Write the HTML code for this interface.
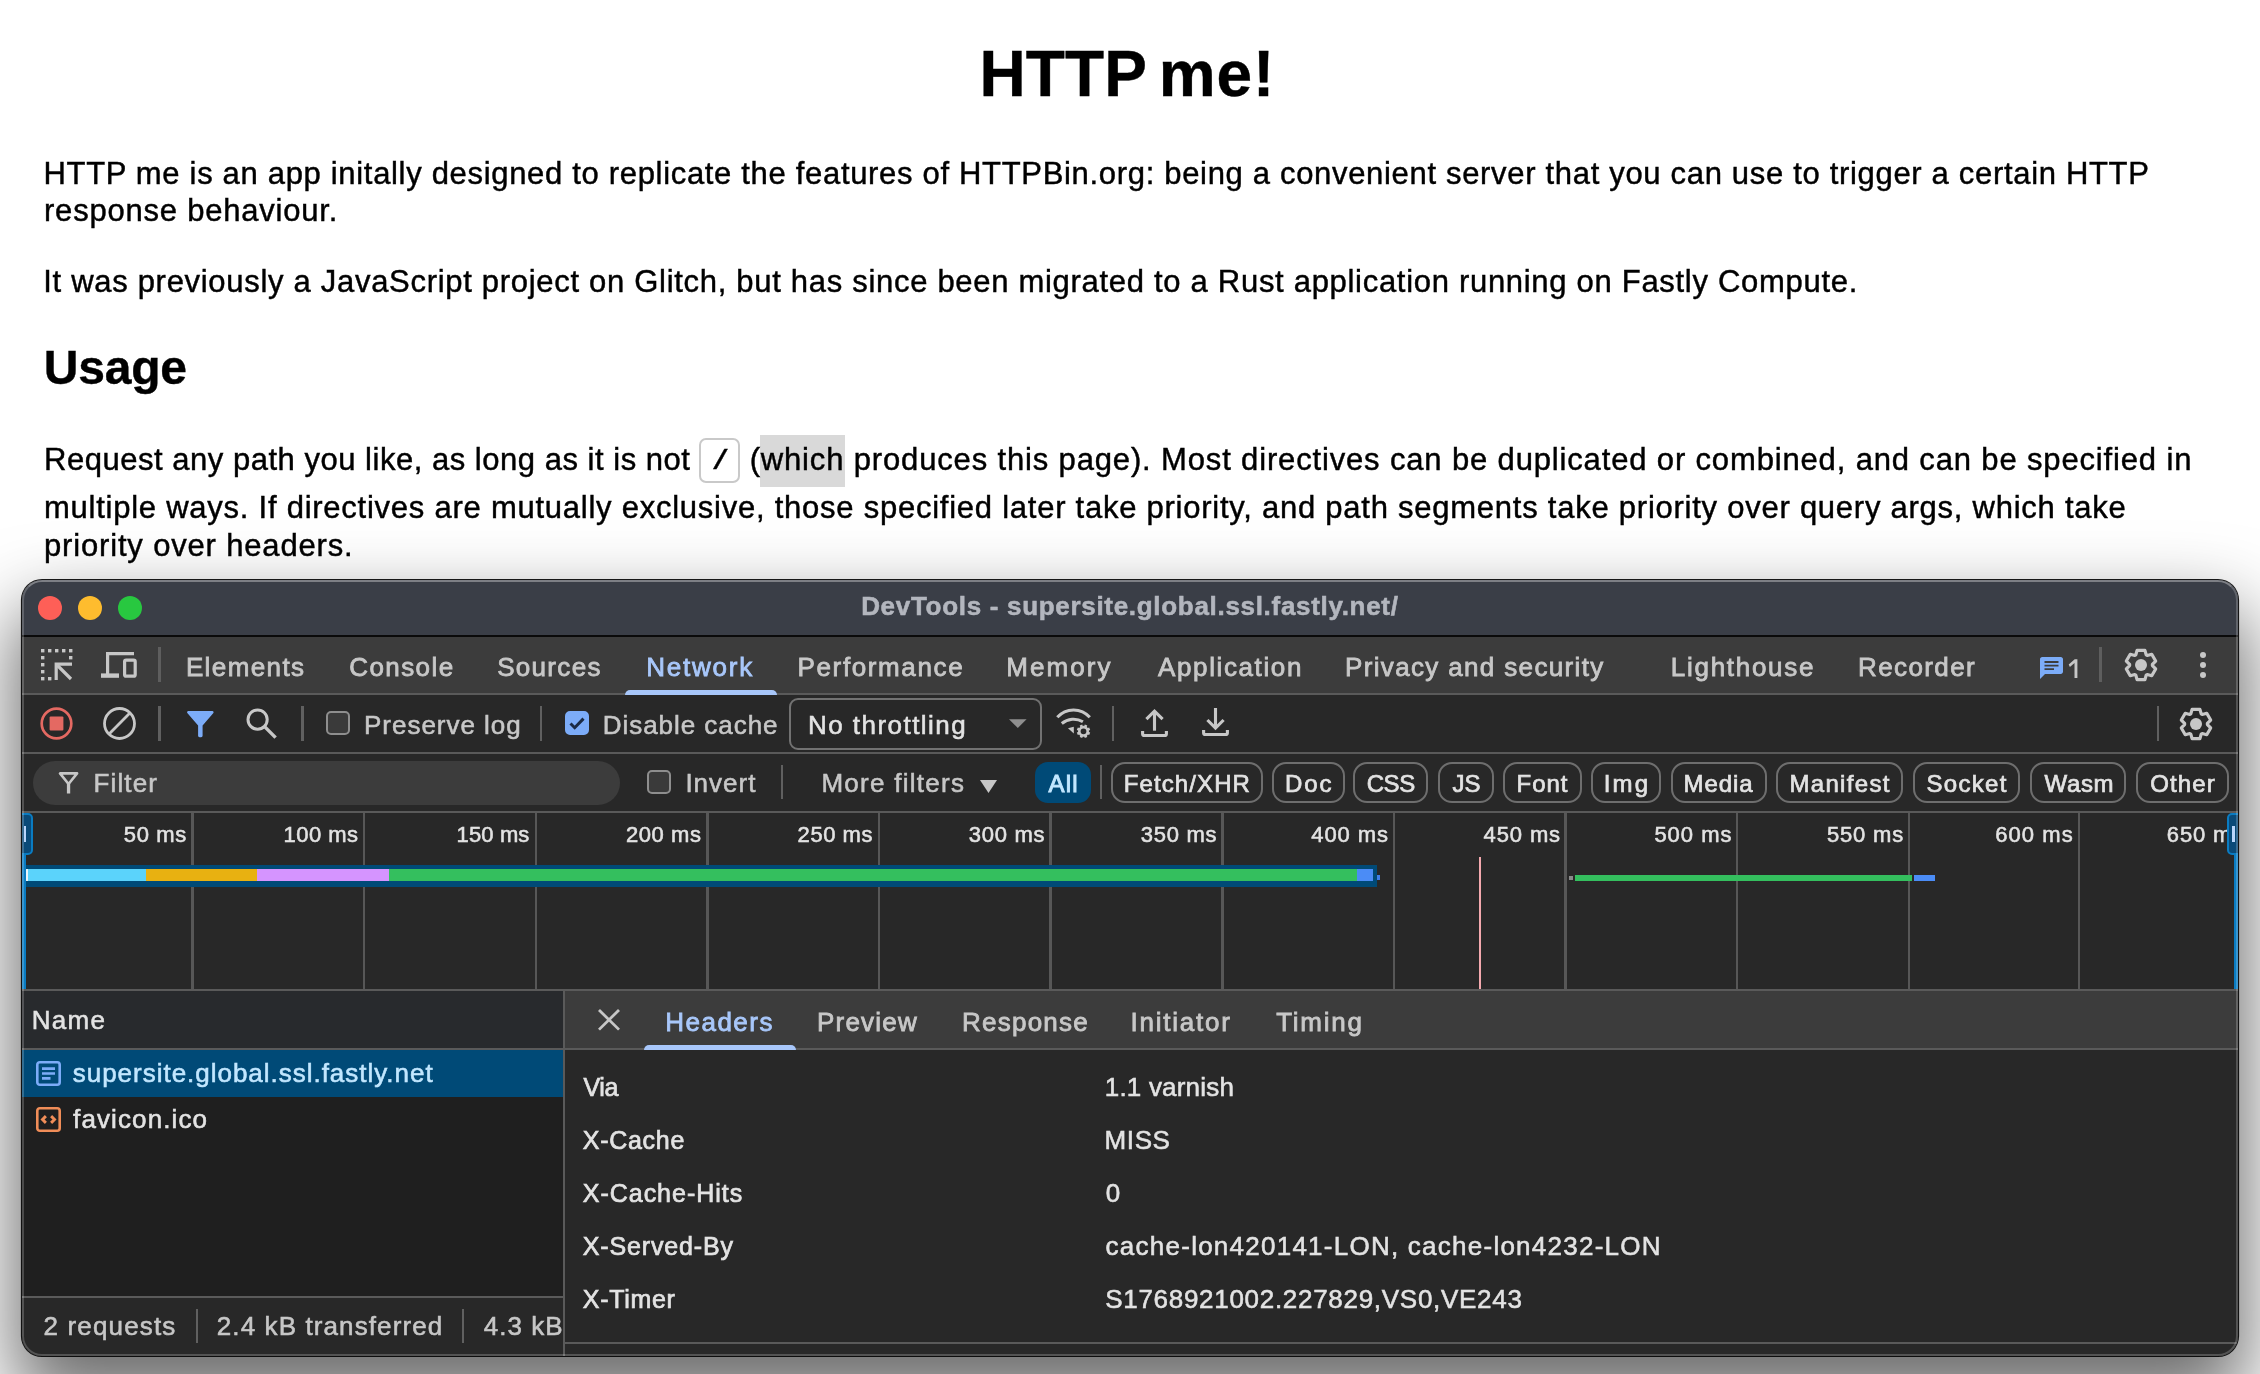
<!DOCTYPE html>
<html><head><meta charset="utf-8"><title>HTTP me!</title>
<style>
html,body{margin:0;padding:0}
body{width:2260px;height:1374px;overflow:hidden;background:#fff;position:relative;font-family:"Liberation Sans",sans-serif}
.t{position:absolute;line-height:1;white-space:nowrap;font-family:"Liberation Sans",sans-serif}
.a{position:absolute}
.hl{left:760px;top:435px;width:85px;height:52px;background:#d9d9d9}
.code{left:699px;top:438px;width:41px;height:45px;box-sizing:border-box;border:2px solid #c9c9c9;border-radius:7px;background:#fff}
.shadow{left:22px;top:580px;width:2216px;height:776px;border-radius:20px;box-shadow:0 0 0 1.1px rgba(0,0,0,.9),0 38px 76px 8px rgba(0,0,0,.58)}
.win{will-change:transform;left:22px;top:580px;width:2216px;height:776px;border-radius:20px;overflow:hidden;background:#282828}
.in{left:-22px;top:-580px;width:2260px;height:1374px}
.pg{left:0;top:0;width:2260px;height:580px;will-change:transform}
.ln{position:absolute;background:#5a5a5a}
.vsep{position:absolute;width:2.2px;background:#606060}
.pill{position:absolute;top:762.2px;height:40.6px;box-sizing:border-box;border:2px solid #6e6e6e;border-radius:14px}
.cb{position:absolute;width:24px;height:24px;box-sizing:border-box;border:2px solid #8e8e8e;border-radius:5px;background:#3a3a3a}
svg{position:absolute;overflow:visible}
</style></head><body>
<div class="a hl"></div>
<div class="a code"></div>
<div class="a pg"><span class="t" style="left:979.56px;top:41.5px;font-size:64px;color:#000;font-weight:700;letter-spacing:0.092px;-webkit-text-stroke:0.4px;">HTTP</span>
<span class="t" style="left:1158.67px;top:41.5px;font-size:64px;color:#000;font-weight:700;letter-spacing:0.944px;-webkit-text-stroke:0.4px;">me!</span>
<span class="t" style="left:43.46px;top:157.6px;font-size:31px;color:#000;letter-spacing:0.680px;-webkit-text-stroke:0.45px;">HTTP me is an app initally designed to replicate the features of HTTPBin.org: being a convenient server that you can use to trigger a certain HTTP</span>
<span class="t" style="left:44.03px;top:195.3px;font-size:31px;color:#000;letter-spacing:0.786px;-webkit-text-stroke:0.45px;">response behaviour.</span>
<span class="t" style="left:43.19px;top:266.0px;font-size:31px;color:#000;letter-spacing:0.700px;-webkit-text-stroke:0.45px;">It was previously a JavaScript project on Glitch, but has since been migrated to a Rust application running on Fastly Compute.</span>
<span class="t" style="left:43.75px;top:344.0px;font-size:48px;color:#000;font-weight:700;letter-spacing:-0.191px;-webkit-text-stroke:0.4px;">Usage</span>
<span class="t" style="left:44.06px;top:443.9px;font-size:31px;color:#000;letter-spacing:0.517px;-webkit-text-stroke:0.45px;">Request any path you like, as long as it is not</span>
<span class="t" style="left:711.98px;top:447.6px;font-size:28px;color:#000;font-weight:700;font-family:'Liberation Mono', monospace;-webkit-text-stroke:0.4px;">/</span>
<span class="t" style="left:749.63px;top:443.9px;font-size:31px;color:#000;letter-spacing:0.847px;-webkit-text-stroke:0.45px;">(which produces this page). Most directives can be duplicated or combined, and can be specified in</span>
<span class="t" style="left:44.01px;top:491.6px;font-size:31px;color:#000;letter-spacing:0.752px;-webkit-text-stroke:0.45px;">multiple ways. If directives are mutually exclusive, those specified later take priority, and path segments take priority over query args, which take</span>
<span class="t" style="left:44.06px;top:529.5px;font-size:31px;color:#000;letter-spacing:0.830px;-webkit-text-stroke:0.45px;">priority over headers.</span></div>
<div class="a shadow"></div>
<div class="a win"><div class="a in">
<!-- title bar -->
<div class="a" style="left:0;top:580px;width:2260px;height:57px;background:#3a3e47"></div>

<div class="a" style="left:0;top:635px;width:2260px;height:2px;background:#0a0a0a"></div>
<div class="a" style="left:38px;top:596px;width:24px;height:24px;border-radius:50%;background:#fe5f57"></div>
<div class="a" style="left:78px;top:596px;width:24px;height:24px;border-radius:50%;background:#febc2e"></div>
<div class="a" style="left:118px;top:596px;width:24px;height:24px;border-radius:50%;background:#28c840"></div>
<!-- tab bar -->
<div class="a" style="left:0;top:637px;width:2260px;height:57px;background:#3c3c3c"></div>
<div class="ln" style="left:0;top:693px;width:2260px;height:2px"></div>
<div class="a" style="left:624.7px;top:690.2px;width:152px;height:5px;background:#a8c7fa;border-radius:5px 5px 0 0"></div>
<div class="vsep" style="left:158px;top:647px;height:35px;width:3px;background:#5e5e5e"></div>
<div class="vsep" style="left:2099px;top:647px;height:35px;width:3px;background:#5e5e5e"></div>
<!-- toolbar -->
<div class="a" style="left:0;top:695px;width:2260px;height:57px;background:#282828"></div>
<div class="ln" style="left:0;top:752px;width:2260px;height:2px"></div>
<div class="vsep" style="left:158.2px;top:706px;height:35px;width:2.6px"></div>
<div class="vsep" style="left:301.2px;top:706px;height:35px;width:2.6px"></div>
<div class="vsep" style="left:540px;top:706px;height:35px"></div>
<div class="vsep" style="left:1112px;top:706px;height:35px"></div>
<div class="vsep" style="left:2157px;top:706px;height:35px"></div>
<div class="cb" style="left:326px;top:711px"></div>
<div class="cb" style="left:565px;top:711px;background:#7cacf8;border-color:#7cacf8"></div>
<svg style="left:565px;top:711px" width="24" height="24" viewBox="0 0 24 24"><path d="M5.5 12.5l4.2 4.2L18.5 7.6" fill="none" stroke="#1b2b45" stroke-width="3"/></svg>
<div class="a" style="left:789.3px;top:697.8px;width:252.4px;height:52px;box-sizing:border-box;border:2px solid #727272;border-radius:9px"></div>
<svg style="left:1009.3px;top:719.2px" width="17.6" height="9.2" viewBox="0 0 18 9"><path d="M0 0h18l-9 9z" fill="#8f8f8f"/></svg>
<!-- filter row -->
<div class="a" style="left:0;top:754px;width:2260px;height:58px;background:#282828"></div>
<div class="ln" style="left:0;top:811px;width:2260px;height:2px"></div>
<div class="a" style="left:33px;top:761px;width:587px;height:44px;border-radius:22px;background:#3c3c3c"></div>
<div class="cb" style="left:647.2px;top:770px"></div>
<div class="vsep" style="left:781px;top:765px;height:34px"></div>
<svg style="left:980px;top:780px" width="17" height="13" viewBox="0 0 17 13"><path d="M0 0h17l-8.5 13z" fill="#c7c7c7"/></svg>
<div class="a" style="left:1035.1px;top:762.2px;width:55.6px;height:40.6px;border-radius:13px;background:#004a77"></div>
<div class="vsep" style="left:1100px;top:765px;height:34px"></div>
<div class="pill" style="left:1110.7px;width:152.0px"></div><div class="pill" style="left:1271.8px;width:73.2px"></div><div class="pill" style="left:1352.8px;width:75.7px"></div><div class="pill" style="left:1437.9px;width:55.8px"></div><div class="pill" style="left:1503.4px;width:78.3px"></div><div class="pill" style="left:1590.8px;width:69.9px"></div><div class="pill" style="left:1670.5px;width:96.1px"></div><div class="pill" style="left:1776.4px;width:127.1px"></div><div class="pill" style="left:1912.9px;width:107.6px"></div><div class="pill" style="left:2029.6px;width:96.8px"></div><div class="pill" style="left:2136.2px;width:92.4px"></div>
<!-- timeline -->
<div class="a" style="left:0;top:813px;width:2260px;height:177px;background:#282828"></div>
<div class="a" style="left:191.3px;top:813px;width:2.5px;height:176px;background:#575757"></div><div class="a" style="left:362.9px;top:813px;width:2.5px;height:176px;background:#575757"></div><div class="a" style="left:534.6px;top:813px;width:2.5px;height:176px;background:#575757"></div><div class="a" style="left:706.2px;top:813px;width:2.5px;height:176px;background:#575757"></div><div class="a" style="left:877.8px;top:813px;width:2.5px;height:176px;background:#575757"></div><div class="a" style="left:1049.4px;top:813px;width:2.5px;height:176px;background:#575757"></div><div class="a" style="left:1221.0px;top:813px;width:2.5px;height:176px;background:#575757"></div><div class="a" style="left:1392.6px;top:813px;width:2.5px;height:176px;background:#575757"></div><div class="a" style="left:1564.3px;top:813px;width:2.5px;height:176px;background:#575757"></div><div class="a" style="left:1735.9px;top:813px;width:2.5px;height:176px;background:#575757"></div><div class="a" style="left:1907.5px;top:813px;width:2.5px;height:176px;background:#575757"></div><div class="a" style="left:2077.5px;top:813px;width:2.5px;height:176px;background:#575757"></div><div class="a" style="left:26px;top:864.5px;width:1351px;height:22.5px;background:#004a77"></div><div class="a" style="left:26.2px;top:869px;width:119.4px;height:11.5px;background:#5bd3fb"></div><div class="a" style="left:145.6px;top:869px;width:111.4px;height:11.5px;background:#e8b111"></div><div class="a" style="left:257.0px;top:869px;width:132.0px;height:11.5px;background:#d594ff"></div><div class="a" style="left:389.0px;top:869px;width:968.0px;height:11.5px;background:#34bf5e"></div><div class="a" style="left:1357.0px;top:869px;width:15.6px;height:11.5px;background:#4b8cf6"></div><div class="a" style="left:26px;top:869px;width:2px;height:11.5px;background:#e8f4fb"></div><div class="a" style="left:1376.5px;top:875px;width:3px;height:5px;background:#3f7fe6"></div><div class="a" style="left:1478.8px;top:857px;width:2.6px;height:132px;background:#f3a9ae"></div><div class="a" style="left:1568.5px;top:875.5px;width:4px;height:4.5px;background:#8a8a8a"></div><div class="a" style="left:1575.2px;top:875px;width:336.8px;height:5.5px;background:#34bf5e"></div><div class="a" style="left:1913.5px;top:875px;width:21px;height:5.5px;background:#4b8cf6"></div><div class="a" style="left:22px;top:814px;width:4px;height:175px;background:#0a7cc2"></div><div class="a" style="left:2233.5px;top:814px;width:4px;height:175px;background:#0a7cc2"></div><div class="a" style="left:18px;top:813px;width:14.5px;height:42px;box-sizing:border-box;border:2px solid #0a7cc2;border-radius:5px;background:#0a4a78"></div><div class="a" style="left:23.6px;top:825.8px;width:2.5px;height:16px;background:#b9d6fb"></div><div class="a" style="left:2227px;top:813px;width:14.5px;height:42px;box-sizing:border-box;border:2px solid #0a7cc2;border-radius:5px;background:#0a4a78"></div><div class="a" style="left:2232px;top:825.8px;width:2.5px;height:16px;background:#b9d6fb"></div>
<div class="ln" style="left:0;top:989px;width:2260px;height:2px"></div>
<!-- lower panes -->
<div class="a" style="left:0;top:991px;width:563px;height:365px;background:#1f1f1f"></div>
<div class="a" style="left:22px;top:991px;width:541px;height:57px;background:#282a2d"></div>
<div class="ln" style="left:22px;top:1048px;width:541px;height:2px"></div>
<div class="a" style="left:22px;top:1050px;width:541px;height:47px;background:#004a77"></div>
<div class="ln" style="left:22px;top:1296px;width:541px;height:2px"></div>
<div class="a" style="left:22px;top:1298px;width:541px;height:58px;background:#282828"></div>
<div class="vsep" style="left:196px;top:1309px;height:34px"></div>
<div class="vsep" style="left:462px;top:1309px;height:34px"></div>
<div class="a" style="left:565px;top:991px;width:1695px;height:58px;background:#3c3c3c"></div>
<div class="ln" style="left:565px;top:1048px;width:1695px;height:2px"></div>
<div class="a" style="left:643.8px;top:1045px;width:152.4px;height:5px;background:#a8c7fa;border-radius:5px 5px 0 0"></div>
<div class="a" style="left:565px;top:1050px;width:1695px;height:306px;background:#282828"></div>
<div class="ln" style="left:565px;top:1342px;width:1695px;height:2px"></div>
<div class="vsep" style="left:563px;top:991px;height:365px;background:#5a5a5a"></div>
<svg style="left:41px;top:649px" width="32" height="32" viewBox="0 0 32 32"><g fill="#c7c7c7"><rect x="0" y="0" width="3.4" height="3.4"/><rect x="7" y="0" width="3.4" height="3.4"/><rect x="14" y="0" width="3.4" height="3.4"/><rect x="21" y="0" width="3.4" height="3.4"/><rect x="28" y="0" width="3.4" height="3.4"/><rect x="0" y="7" width="3.4" height="3.4"/><rect x="28" y="7" width="3.4" height="3.4"/><rect x="0" y="14" width="3.4" height="3.4"/><rect x="0" y="21" width="3.4" height="3.4"/><rect x="0" y="28" width="3.4" height="3.4"/><rect x="7" y="28" width="3.4" height="3.4"/></g><path d="M15.2 31V15.2H31" fill="none" stroke="#c7c7c7" stroke-width="3.2"/><path d="M16.5 16.5L30 30" stroke="#c7c7c7" stroke-width="3.2"/></svg><svg style="left:101px;top:651px" width="37" height="29" viewBox="0 0 37 29"><path d="M33 2.6H6.6V24" fill="none" stroke="#c7c7c7" stroke-width="3.2"/><rect x="0" y="22.4" width="18" height="4.4" fill="#c7c7c7"/><rect x="23.6" y="9.2" width="10.6" height="16" rx="1.5" fill="none" stroke="#c7c7c7" stroke-width="3.2"/></svg><svg style="left:40.4px;top:707.3px" width="33" height="33" viewBox="0 0 33 33"><circle cx="16.5" cy="16.5" r="14.8" fill="none" stroke="#e46962" stroke-width="2.7"/><rect x="9.6" y="9.6" width="13.8" height="13.8" rx="1" fill="#e46962"/></svg><svg style="left:102.5px;top:707.3px" width="33" height="33" viewBox="0 0 33 33"><circle cx="16.5" cy="16.5" r="15" fill="none" stroke="#c7c7c7" stroke-width="2.8"/><path d="M6.1 26.9L26.9 6.1" stroke="#c7c7c7" stroke-width="2.8"/></svg><svg style="left:186.7px;top:710.6px" width="26.7" height="26.3" viewBox="0 0 26.7 26.3"><path d="M1.3 0h24.1c1 0 1.6 1.1 1 1.9L15.6 14.4v10.4c0 .8-.7 1.5-1.5 1.5h-1.5c-.8 0-1.5-.7-1.5-1.5V14.4L.3 1.9C-.3 1.1.3 0 1.3 0z" fill="#7cacf8"/></svg><svg style="left:246px;top:708px" width="31" height="31" viewBox="0 0 31 31"><circle cx="11.6" cy="11.6" r="9.6" fill="none" stroke="#c7c7c7" stroke-width="3"/><path d="M18.6 18.6L29.6 29.6" stroke="#c7c7c7" stroke-width="3.4"/></svg><svg style="left:1056px;top:708px" width="36" height="31" viewBox="0 0 36 31"><g fill="none" stroke="#c7c7c7" stroke-width="3"><path d="M1.3 9.3A21.5 21.5 0 0 1 33.8 9.3"/><path d="M5.8 15.5A18.1 18.1 0 0 1 26.9 13.8"/></g><path d="M12 20.2l5.8-1.4v6.6z" fill="#c7c7c7"/><circle cx="27.5" cy="23.3" r="4.2" fill="none" stroke="#c7c7c7" stroke-width="2.6"/><path d="M31.75 25.06L33.69 25.86M29.26 27.55L30.06 29.49M25.74 27.55L24.94 29.49M23.25 25.06L21.31 25.86M23.25 21.54L21.31 20.74M25.74 19.05L24.94 17.11M29.26 19.05L30.06 17.11M31.75 21.54L33.69 20.74" stroke="#c7c7c7" stroke-width="2.7"/></svg><svg style="left:1141px;top:709px" width="27" height="28" viewBox="0 0 27 28"><g fill="none" stroke="#c7c7c7" stroke-width="3.1"><path d="M13.5 21.7V2.2"/><path d="M5.4 10.2L13.5 2.1 21.6 10.2"/><path d="M1.6 22v2.7c0 1 .8 1.8 1.8 1.8h20.2c1 0 1.8-.8 1.8-1.8V22"/></g></svg><svg style="left:1202.3px;top:708.4px" width="27" height="28" viewBox="0 0 27 28"><g fill="none" stroke="#c7c7c7" stroke-width="3.1"><path d="M13.5 0V19.8"/><path d="M5.4 12L13.5 20.1 21.6 12"/><path d="M1.6 22v2.7c0 1 .8 1.8 1.8 1.8h20.2c1 0 1.8-.8 1.8-1.8V22"/></g></svg><svg style="left:2141px;top:665.1px" width="1" height="1" viewBox="0 0 1 1"><path d="M-5.18 -10.16 L-3.93 -14.68 L3.93 -14.68 L5.18 -10.16 L6.21 -9.56 L10.75 -10.75 L14.68 -3.93 L11.38 -0.60 L11.38 0.60 L14.68 3.93 L10.75 10.75 L6.21 9.56 L5.18 10.16 L3.93 14.68 L-3.93 14.68 L-5.18 10.16 L-6.21 9.56 L-10.75 10.75 L-14.68 3.93 L-11.38 0.60 L-11.38 -0.60 L-14.68 -3.93 L-10.75 -10.75 L-6.21 -9.56Z" fill="none" stroke="#c7c7c7" stroke-width="3.2" stroke-linejoin="round"/><circle cx="0" cy="0" r="6" fill="#c7c7c7"/></svg><svg style="left:2195.7px;top:723.9px" width="1" height="1" viewBox="0 0 1 1"><path d="M-5.18 -10.16 L-3.93 -14.68 L3.93 -14.68 L5.18 -10.16 L6.21 -9.56 L10.75 -10.75 L14.68 -3.93 L11.38 -0.60 L11.38 0.60 L14.68 3.93 L10.75 10.75 L6.21 9.56 L5.18 10.16 L3.93 14.68 L-3.93 14.68 L-5.18 10.16 L-6.21 9.56 L-10.75 10.75 L-14.68 3.93 L-11.38 0.60 L-11.38 -0.60 L-14.68 -3.93 L-10.75 -10.75 L-6.21 -9.56Z" fill="none" stroke="#c7c7c7" stroke-width="3.2" stroke-linejoin="round"/><circle cx="0" cy="0" r="6" fill="#c7c7c7"/></svg><div class="a" style="left:2199.7px;top:651.7px;width:6.8px;height:6.8px;border-radius:50%;background:#c7c7c7"></div><div class="a" style="left:2199.7px;top:661.7px;width:6.8px;height:6.8px;border-radius:50%;background:#c7c7c7"></div><div class="a" style="left:2199.7px;top:671.7px;width:6.8px;height:6.8px;border-radius:50%;background:#c7c7c7"></div><svg style="left:2039.5px;top:656.5px" width="23" height="22" viewBox="0 0 23 22"><path d="M2.2 0h18.6c1.2 0 2.2 1 2.2 2.2v12.6c0 1.2-1 2.2-2.2 2.2H5L0 22V2.2C0 1 1 0 2.2 0z" fill="#7cacf8"/><g stroke="#3c3c3c" stroke-width="1.8"><path d="M4.5 5h14M4.5 8.6h14M4.5 12.2h9.5"/></g></svg><svg style="left:0;top:0" width="1" height="1"><path d="M2068.7 664.6L2074.7 659.2H2077.4V678H2074.5V662.9L2069.9 667z" fill="#c7c7c7"/></svg><svg style="left:57.8px;top:772px" width="21.1" height="21.5" viewBox="0 0 21.1 21.5"><path d="M2 1.4h17.1L10.55 12z" fill="none" stroke="#c7c7c7" stroke-width="2.6" stroke-linejoin="round"/><path d="M10.55 11v10.5" stroke="#c7c7c7" stroke-width="3.3"/></svg><svg style="left:597.8px;top:1009px" width="22" height="21.6" viewBox="0 0 22 22" preserveAspectRatio="none"><path d="M1 1l20 20M21 1L1 21" stroke="#c7c7c7" stroke-width="2.8"/></svg><svg style="left:36.3px;top:1061.3px" width="25" height="25" viewBox="0 0 25 25"><rect x="1.3" y="1.3" width="22.4" height="22.4" rx="2.5" fill="none" stroke="#7cacf8" stroke-width="2.6"/><g stroke="#7cacf8" stroke-width="2.6"><path d="M6 7.6h13M6 12.5h13M6 17.4h8.5"/></g></svg><svg style="left:36.3px;top:1107px" width="25" height="25" viewBox="0 0 25 25"><rect x="1.3" y="1.3" width="22.4" height="22.4" rx="2.5" fill="none" stroke="#f08d58" stroke-width="2.6"/><g fill="none" stroke="#f08d58" stroke-width="2.9"><path d="M9.9 9.1l-3.4 3.4 3.4 3.4M15.1 9.1l3.4 3.4-3.4 3.4"/></g></svg>
<span class="t" style="left:861.14px;top:593.4px;font-size:26px;color:#b3b6be;font-weight:700;letter-spacing:0.695px;-webkit-text-stroke:0.55px;">DevTools - supersite.global.ssl.fastly.net/</span>
<span class="t" style="left:185.89px;top:653.9px;font-size:26px;color:#c7c7c7;letter-spacing:1.393px;-webkit-text-stroke:0.8px;">Elements</span>
<span class="t" style="left:349.26px;top:653.9px;font-size:26px;color:#c7c7c7;letter-spacing:1.418px;-webkit-text-stroke:0.8px;">Console</span>
<span class="t" style="left:497.17px;top:653.9px;font-size:26px;color:#c7c7c7;letter-spacing:1.316px;-webkit-text-stroke:0.8px;">Sources</span>
<span class="t" style="left:646.29px;top:653.9px;font-size:26px;color:#a8c7fa;letter-spacing:1.749px;-webkit-text-stroke:0.8px;">Network</span>
<span class="t" style="left:797.59px;top:653.9px;font-size:26px;color:#c7c7c7;letter-spacing:1.619px;-webkit-text-stroke:0.8px;">Performance</span>
<span class="t" style="left:1006.29px;top:653.9px;font-size:26px;color:#c7c7c7;letter-spacing:2.052px;-webkit-text-stroke:0.8px;">Memory</span>
<span class="t" style="left:1158.03px;top:653.9px;font-size:26px;color:#c7c7c7;letter-spacing:1.618px;-webkit-text-stroke:0.8px;">Application</span>
<span class="t" style="left:1344.99px;top:653.9px;font-size:26px;color:#c7c7c7;letter-spacing:1.351px;-webkit-text-stroke:0.8px;">Privacy and security</span>
<span class="t" style="left:1670.79px;top:653.9px;font-size:26px;color:#c7c7c7;letter-spacing:1.718px;-webkit-text-stroke:0.8px;">Lighthouse</span>
<span class="t" style="left:1858.09px;top:653.9px;font-size:26px;color:#c7c7c7;letter-spacing:1.378px;-webkit-text-stroke:0.8px;">Recorder</span>
<span class="t" style="left:364.01px;top:712.0px;font-size:26px;color:#c7c7c7;letter-spacing:0.980px;-webkit-text-stroke:0.55px;">Preserve log</span>
<span class="t" style="left:602.81px;top:712.0px;font-size:26px;color:#c7c7c7;letter-spacing:0.950px;-webkit-text-stroke:0.55px;">Disable cache</span>
<span class="t" style="left:808.01px;top:712.0px;font-size:26px;color:#e3e3e3;letter-spacing:1.461px;-webkit-text-stroke:0.55px;">No throttling</span>
<span class="t" style="left:93.41px;top:770.0px;font-size:26px;color:#c7c7c7;letter-spacing:1.163px;-webkit-text-stroke:0.55px;">Filter</span>
<span class="t" style="left:685.38px;top:770.0px;font-size:26px;color:#c7c7c7;letter-spacing:1.011px;-webkit-text-stroke:0.55px;">Invert</span>
<span class="t" style="left:821.41px;top:770.0px;font-size:26px;color:#c7c7c7;letter-spacing:1.267px;-webkit-text-stroke:0.55px;">More filters</span>
<span class="t" style="left:1048.45px;top:771.7px;font-size:24px;color:#c2e7ff;letter-spacing:1.224px;-webkit-text-stroke:0.9px;">All</span>
<span class="t" style="left:123.79px;top:824.0px;font-size:22px;color:#e3e3e3;letter-spacing:0.661px;-webkit-text-stroke:0.55px;">50 ms</span>
<span class="t" style="left:283.60px;top:824.0px;font-size:22px;color:#e3e3e3;letter-spacing:0.447px;-webkit-text-stroke:0.55px;">100 ms</span>
<span class="t" style="left:456.60px;top:824.0px;font-size:22px;color:#e3e3e3;letter-spacing:0.123px;-webkit-text-stroke:0.55px;">150 ms</span>
<span class="t" style="left:626.02px;top:824.0px;font-size:22px;color:#e3e3e3;letter-spacing:0.543px;-webkit-text-stroke:0.55px;">200 ms</span>
<span class="t" style="left:797.62px;top:824.0px;font-size:22px;color:#e3e3e3;letter-spacing:0.543px;-webkit-text-stroke:0.55px;">250 ms</span>
<span class="t" style="left:968.80px;top:824.0px;font-size:22px;color:#e3e3e3;letter-spacing:0.691px;-webkit-text-stroke:0.55px;">300 ms</span>
<span class="t" style="left:1140.80px;top:824.0px;font-size:22px;color:#e3e3e3;letter-spacing:0.691px;-webkit-text-stroke:0.55px;">350 ms</span>
<span class="t" style="left:1311.31px;top:824.0px;font-size:22px;color:#e3e3e3;letter-spacing:0.892px;-webkit-text-stroke:0.55px;">400 ms</span>
<span class="t" style="left:1483.51px;top:824.0px;font-size:22px;color:#e3e3e3;letter-spacing:0.892px;-webkit-text-stroke:0.55px;">450 ms</span>
<span class="t" style="left:1654.39px;top:824.0px;font-size:22px;color:#e3e3e3;letter-spacing:1.009px;-webkit-text-stroke:0.55px;">500 ms</span>
<span class="t" style="left:1826.99px;top:824.0px;font-size:22px;color:#e3e3e3;letter-spacing:0.809px;-webkit-text-stroke:0.55px;">550 ms</span>
<span class="t" style="left:1995.21px;top:824.0px;font-size:22px;color:#e3e3e3;letter-spacing:1.068px;-webkit-text-stroke:0.55px;">600 ms</span>
<span class="t" style="left:2166.81px;top:824.0px;font-size:22px;color:#e3e3e3;letter-spacing:0.868px;-webkit-text-stroke:0.55px;width:60.2px;overflow:hidden;">650 ms</span>
<span class="t" style="left:31.81px;top:1006.6px;font-size:26px;color:#e3e3e3;letter-spacing:1.229px;-webkit-text-stroke:0.55px;">Name</span>
<span class="t" style="left:665.29px;top:1009.1px;font-size:26px;color:#a8c7fa;letter-spacing:1.474px;-webkit-text-stroke:0.8px;">Headers</span>
<span class="t" style="left:817.09px;top:1009.1px;font-size:26px;color:#c7c7c7;letter-spacing:1.193px;-webkit-text-stroke:0.8px;">Preview</span>
<span class="t" style="left:961.89px;top:1009.1px;font-size:26px;color:#c7c7c7;letter-spacing:1.265px;-webkit-text-stroke:0.8px;">Response</span>
<span class="t" style="left:1130.58px;top:1009.1px;font-size:26px;color:#c7c7c7;letter-spacing:1.757px;-webkit-text-stroke:0.8px;">Initiator</span>
<span class="t" style="left:1276.18px;top:1009.1px;font-size:26px;color:#c7c7c7;letter-spacing:1.732px;-webkit-text-stroke:0.8px;">Timing</span>
<span class="t" style="left:72.76px;top:1059.9px;font-size:26px;color:#c2e7ff;letter-spacing:0.980px;-webkit-text-stroke:0.55px;">supersite.global.ssl.fastly.net</span>
<span class="t" style="left:73.10px;top:1106.0px;font-size:26px;color:#e3e3e3;letter-spacing:1.105px;-webkit-text-stroke:0.55px;">favicon.ico</span>
<span class="t" style="left:583.39px;top:1074.8px;font-size:25px;color:#e3e3e3;letter-spacing:-0.308px;-webkit-text-stroke:0.7px;">Via</span>
<span class="t" style="left:1104.73px;top:1074.0px;font-size:26px;color:#e3e3e3;letter-spacing:0.202px;-webkit-text-stroke:0.55px;">1.1 varnish</span>
<span class="t" style="left:582.78px;top:1127.8px;font-size:25px;color:#e3e3e3;letter-spacing:0.720px;-webkit-text-stroke:0.7px;">X-Cache</span>
<span class="t" style="left:1104.61px;top:1127.0px;font-size:26px;color:#e3e3e3;letter-spacing:0.573px;-webkit-text-stroke:0.55px;">MISS</span>
<span class="t" style="left:582.78px;top:1180.8px;font-size:25px;color:#e3e3e3;letter-spacing:0.978px;-webkit-text-stroke:0.7px;">X-Cache-Hits</span>
<span class="t" style="left:1105.68px;top:1180.0px;font-size:26px;color:#e3e3e3;-webkit-text-stroke:0.55px;">0</span>
<span class="t" style="left:582.78px;top:1233.8px;font-size:25px;color:#e3e3e3;letter-spacing:0.850px;-webkit-text-stroke:0.7px;">X-Served-By</span>
<span class="t" style="left:1105.61px;top:1233.0px;font-size:26px;color:#e3e3e3;letter-spacing:1.247px;-webkit-text-stroke:0.55px;">cache-lon420141-LON, cache-lon4232-LON</span>
<span class="t" style="left:582.78px;top:1286.8px;font-size:25px;color:#e3e3e3;letter-spacing:0.705px;-webkit-text-stroke:0.7px;">X-Timer</span>
<span class="t" style="left:1105.16px;top:1286.0px;font-size:26px;color:#e3e3e3;letter-spacing:0.710px;-webkit-text-stroke:0.55px;">S1768921002.227829,VS0,VE243</span>
<span class="t" style="left:43.54px;top:1312.7px;font-size:26px;color:#c7c7c7;letter-spacing:1.154px;-webkit-text-stroke:0.55px;">2 requests</span>
<span class="t" style="left:216.74px;top:1312.7px;font-size:26px;color:#c7c7c7;letter-spacing:1.108px;-webkit-text-stroke:0.55px;">2.4 kB transferred</span>
<span class="t" style="left:483.85px;top:1312.7px;font-size:26px;color:#c7c7c7;letter-spacing:1.005px;-webkit-text-stroke:0.55px;">4.3 kB</span>
<span class="t" style="left:1123.80px;top:771.7px;font-size:24px;color:#e3e3e3;letter-spacing:1.093px;-webkit-text-stroke:0.7px;">Fetch/XHR</span>
<span class="t" style="left:1284.90px;top:771.7px;font-size:24px;color:#e3e3e3;letter-spacing:1.909px;-webkit-text-stroke:0.7px;">Doc</span>
<span class="t" style="left:1366.69px;top:771.7px;font-size:24px;color:#e3e3e3;letter-spacing:-0.415px;-webkit-text-stroke:0.7px;">CSS</span>
<span class="t" style="left:1452.38px;top:771.7px;font-size:24px;color:#e3e3e3;letter-spacing:0.118px;-webkit-text-stroke:0.7px;">JS</span>
<span class="t" style="left:1516.50px;top:771.7px;font-size:24px;color:#e3e3e3;letter-spacing:0.993px;-webkit-text-stroke:0.7px;">Font</span>
<span class="t" style="left:1603.70px;top:771.7px;font-size:24px;color:#e3e3e3;letter-spacing:2.242px;-webkit-text-stroke:0.7px;">Img</span>
<span class="t" style="left:1683.60px;top:771.7px;font-size:24px;color:#e3e3e3;letter-spacing:0.904px;-webkit-text-stroke:0.7px;">Media</span>
<span class="t" style="left:1789.50px;top:771.7px;font-size:24px;color:#e3e3e3;letter-spacing:1.309px;-webkit-text-stroke:0.7px;">Manifest</span>
<span class="t" style="left:1926.42px;top:771.7px;font-size:24px;color:#e3e3e3;letter-spacing:1.327px;-webkit-text-stroke:0.7px;">Socket</span>
<span class="t" style="left:2044.50px;top:771.7px;font-size:24px;color:#e3e3e3;letter-spacing:0.646px;-webkit-text-stroke:0.7px;">Wasm</span>
<span class="t" style="left:2150.14px;top:771.7px;font-size:24px;color:#e3e3e3;letter-spacing:1.127px;-webkit-text-stroke:0.7px;">Other</span>
</div><div class="a" style="left:0;top:0;width:2216px;height:776px;box-sizing:border-box;border:2px solid rgba(255,255,255,.2);border-top-color:rgba(255,255,255,.34);border-radius:20px"></div></div>
</body></html>
